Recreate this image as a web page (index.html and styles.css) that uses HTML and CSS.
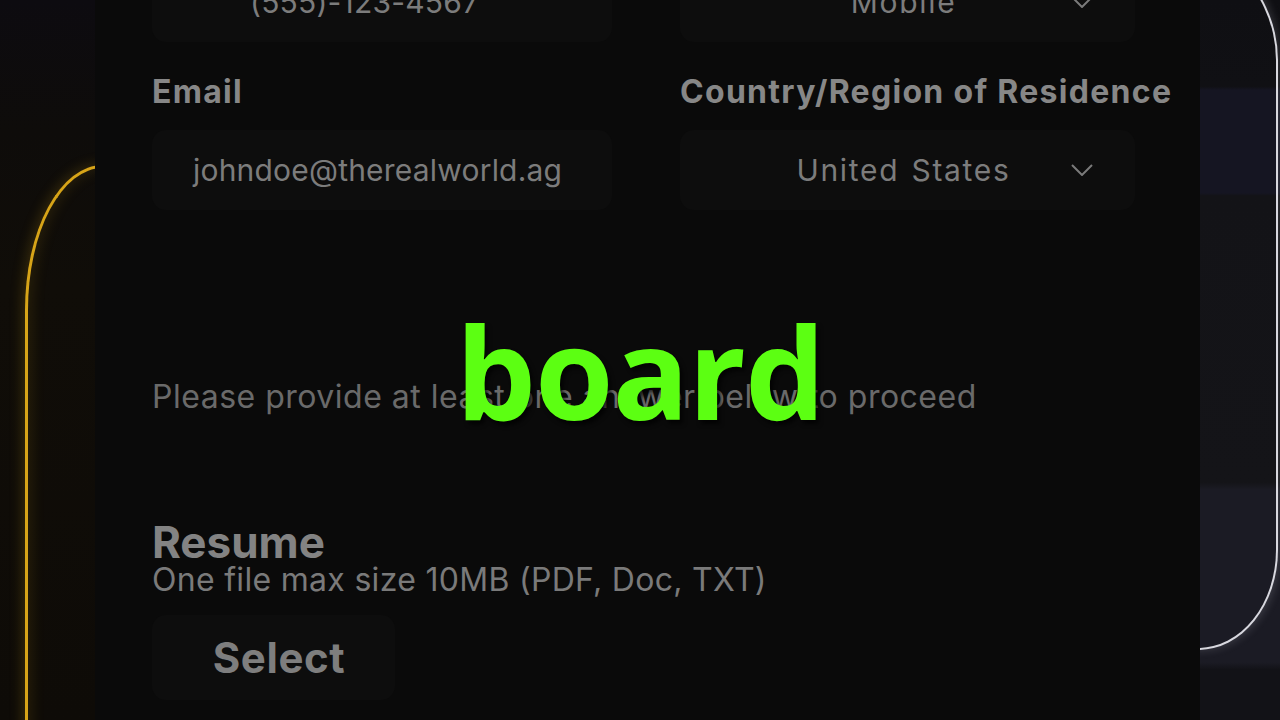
FILE: index.html
```html
<!DOCTYPE html>
<html lang="en">
<head>
<meta charset="utf-8">
<title>Application form</title>
<link rel="stylesheet" href="styles.css">
</head>
<body>
<div class="frame">
  <aside class="side side-left">
    <div class="glow-card glow-yellow"></div>
  </aside>

  <main class="panel">
    <div class="row row-top">
      <div class="field">
        <div class="box box-phone"><span class="value">(555)-123-4567</span></div>
      </div>
      <div class="field">
        <div class="box box-select"><span class="value">Mobile</span>
          <svg class="chev" viewBox="0 0 22 12" width="22" height="12"><path d="M1 1 L11 11 L21 1" /></svg>
        </div>
      </div>
    </div>

    <div class="row">
      <div class="field">
        <div class="label">Email</div>
        <div class="box box-input"><span class="value">johndoe@therealworld.ag</span></div>
      </div>
      <div class="field">
        <div class="label">Country/Region of Residence</div>
        <div class="box box-select"><span class="value">United States</span>
          <svg class="chev" viewBox="0 0 22 12" width="22" height="12"><path d="M1 1 L11 11 L21 1" /></svg>
        </div>
      </div>
    </div>

    <p class="notice">Please provide at least one answer below to proceed</p>

    <section class="upload">
      <div class="upload-title">Resume</div>
      <div class="upload-hint">One file max size 10MB (PDF, Doc, TXT)</div>
      <button class="select-btn" type="button">Select</button>
    </section>
  </main>

  <aside class="side side-right">
    <div class="glow-card glow-white"></div>
  </aside>

  <div class="caption">board</div>
</div>
</body>
</html>
```

FILE: styles.css
```css
* { box-sizing: border-box; }

html, body {
  margin: 0;
  padding: 0;
  width: 1280px;
  height: 720px;
  overflow: hidden;
  background: #0a0a0a;
}

.frame {
  position: relative;
  display: flex;
  width: 1280px;
  height: 720px;
  overflow: hidden;
  font-family: "Inter", "Liberation Sans", sans-serif;
}

/* side strips */
.side {
  position: relative;
  overflow: hidden;
  height: 720px;
  flex: none;
}

.side-left {
  width: 95px;
  background: linear-gradient(180deg, #0d0b10 0%, #0e0c0a 18%, #100d08 40%, #0e0b07 100%);
  padding: 165px 0 0 25px;
}

.glow-card {
  width: 300px;
}

.glow-yellow {
  height: 700px;
  border: 3px solid #d7a418;
  border-right: none;
  border-radius: 78px 0 0 0 / 145px 0 0 0;
  box-shadow: -2px 0 14px rgba(215, 164, 24, 0.22), inset 4px 0 14px rgba(215, 164, 24, 0.12);
}

.side-right {
  width: 80px;
  background:
    linear-gradient(180deg, #0f0f13 0%, #101014 12%, #151522 12.5%, #151522 26.8%, #131317 27.2%, #141418 67%, #1b1b24 68%, #1b1b24 92%, #121217 93%);
  display: flex;
  flex-direction: column;
  align-items: flex-end;
  padding-right: 2px;
}

.glow-white {
  margin-top: -80px;
  height: 730px;
  border: 2.5px solid #d8d8df;
  border-left: none;
  border-radius: 0 160px 80px 0 / 0 140px 100px 0;
  box-shadow: 2px 0 10px rgba(220, 220, 235, 0.18);
  flex: none;
}

/* central panel */
.panel {
  flex: 1;
  background: #0a0a0a;
  padding: 0 0 0 57px;
  color: #7a7a7a;
}

.row {
  display: grid;
  grid-template-columns: 460px 455px;
  column-gap: 68px;
}

.row-top {
  margin-top: -38px;
  margin-bottom: 32px;
}

.field {
  min-width: 0;
}

.label {
  font-weight: 700;
  font-size: 32px;
  line-height: 36px;
  color: #878787;
  white-space: nowrap;
  letter-spacing: 1.3px;
  margin-bottom: 20px;
}

.box {
  height: 80px;
  background: #0d0d0d;
  border-radius: 14px;
  display: flex;
  align-items: center;
  font-size: 30px;
  letter-spacing: 0.2px;
  color: #7c7c7c;
  white-space: nowrap;
}

.box-input { padding-left: 41px; }
.box-phone { padding-left: 98px; }

.box-select {
  padding: 0 42px 0 56px;
}

.box-select .value {
  flex: 1;
  text-align: center;
  letter-spacing: 1.7px;
  word-spacing: 2px;
}

.chev {
  fill: none;
  stroke: #7a7a7a;
  stroke-width: 2;
  flex: none;
}

.notice {
  margin: 167px 0 0;
  font-size: 32px;
  line-height: 40px;
  letter-spacing: 0.5px;
  color: #6a6a6a;
  white-space: nowrap;
}

.upload {
  margin-top: 104px;
}

.upload-title {
  font-weight: 700;
  font-size: 44px;
  line-height: 42px;
  color: #838383;
}

.upload-hint {
  font-size: 32px;
  line-height: 34px;
  letter-spacing: 0.3px;
  color: #7a7a7a;
}

.select-btn {
  display: block;
  margin-top: 18px;
  width: 243px;
  height: 85px;
  background: #0d0d0d;
  border: none;
  border-radius: 14px;
  font-family: "Inter", "Liberation Sans", sans-serif;
  font-weight: 700;
  font-size: 42px;
  letter-spacing: 0.6px;
  color: #7e7e7e;
  padding: 0 0 0 11px;
}

/* subtitle overlay */
.caption {
  position: absolute;
  left: 0;
  right: 0;
  top: 296px;
  text-align: center;
  font-family: "Open Sans", "DejaVu Sans", sans-serif;
  font-weight: 700;
  font-size: 127px;
  line-height: 150px;
  color: #5cff12;
  text-shadow: 3px 4px 4px rgba(0, 0, 0, 0.7);
  letter-spacing: -1px;
}
```
